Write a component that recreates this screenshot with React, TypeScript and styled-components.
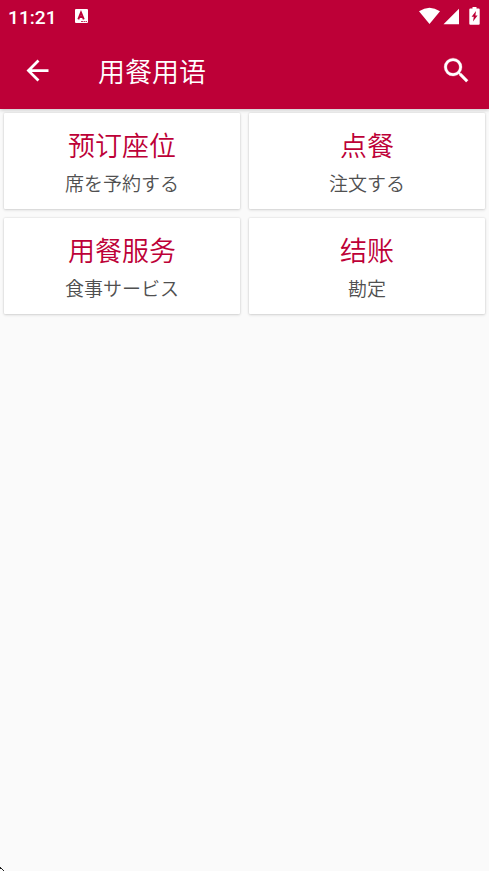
import React from 'react';
import styled, { createGlobalStyle } from 'styled-components';

type Phrase = {
  title: string;
  caption: string;
};

const phrases: Phrase[] = [
  { title: '预订座位', caption: '席を予約する' },
  { title: '点餐', caption: '注文する' },
  { title: '用餐服务', caption: '食事サービス' },
  { title: '结账', caption: '勘定' },
];

const GlobalStyle = createGlobalStyle`
  * {
    box-sizing: border-box;
  }

  body {
    margin: 0;
    background: #fafafa;
    font-family: Roboto, 'Noto Sans CJK SC', sans-serif;
  }
`;

const Screen = styled.div`
  position: relative;
  display: flex;
  flex-direction: column;
  height: 871px;
  overflow: hidden;
  background: #fafafa;
`;

const Header = styled.header`
  background: #bd0037;
  color: #fff;
  box-shadow: 0 1px 4px rgba(0, 0, 0, 0.22);
`;

const StatusBar = styled.div`
  display: flex;
  align-items: center;
  height: 32px;
  padding: 0 8px 0 8px;
`;

const Clock = styled.span`
  width: 67px;
  padding-top: 3px;
  font-size: 19.2px;
  font-weight: 500;
  line-height: 29px;
`;

const StatusIcons = styled.div`
  display: flex;
  margin-left: auto;
`;

const Toolbar = styled.div`
  display: flex;
  align-items: center;
  height: 77px;
  padding: 0 16px 0 21px;
`;

const IconButton = styled.button`
  display: flex;
  padding: 0;
  border: 0;
  background: none;
  color: inherit;
`;

const Heading = styled.h1`
  flex: 1;
  margin: 0 0 0 44px;
  padding-top: 4px;
  font-size: 27px;
  font-weight: 350;
  line-height: 40px;
`;

const Grid = styled.main`
  display: grid;
  grid-template-columns: 1fr 1fr;
  grid-auto-rows: 96px;
  gap: 9px;
  padding: 4px;
`;

const Card = styled.section`
  padding-top: 14px;
  border-radius: 1px;
  background: #fff;
  text-align: center;
  box-shadow: 0 1px 3px rgba(0, 0, 0, 0.14), 0 0 2px rgba(0, 0, 0, 0.14);
`;

const Title = styled.h2`
  margin: 0;
  color: #bd0037;
  font-size: 27px;
  font-weight: 350;
  line-height: 40px;
`;

const Caption = styled.p`
  margin: 4px 0 0;
  color: #505050;
  font-family: Roboto, 'Noto Sans CJK JP', sans-serif;
  font-size: 19px;
  font-weight: 350;
  line-height: 28px;
`;

const CornerMark = styled.svg`
  position: absolute;
  bottom: 0;
  left: 0;
`;

const KeyboardIcon: React.FC = () => (
  <svg width="13" height="14" viewBox="0 0 13 14">
    <rect width="13" height="14" rx="1" fill="#fff" />
    <path d="M3.3 10.4 L6 3.6 L8.8 10.4 M4.4 8 H8" fill="none" stroke="#bd0037" strokeWidth="1.9" />
    <path d="M6 12.5 H12" stroke="#bd0037" strokeWidth="0.8" strokeDasharray="2 0.5" />
  </svg>
);

const PhoneStatus: React.FC = () => (
  <StatusIcons>
    <svg width="62" height="18" viewBox="0 0 62 18" fill="#fff">
      <path d="M0 4.3 Q10.5 -2.8 21 4.3 L10.5 17 Z" />
      <path d="M40 1.8 V17.3 H24.5 Z" />
      <path d="M53.5 0 h4 v1.5 h2.2 q1 0 1 1 v14.3 q0 1 -1 1 h-8.4 q-1 0 -1 -1 V2.5 q0 -1 1 -1 h2.2 z" />
      <path d="M57 4 L52.6 9.8 H54.8 L54 14.6 L58.6 8.5 H56.4 Z" fill="#bd0037" />
    </svg>
  </StatusIcons>
);

const BackIcon: React.FC = () => (
  <svg width="33" height="33" viewBox="0 0 24 24" fill="currentColor">
    <path d="M20 11H7.83l5.59-5.59L12 4l-8 8 8 8 1.41-1.41L7.83 13H20v-2z" />
  </svg>
);

const SearchIcon: React.FC = () => (
  <svg width="33" height="33" viewBox="0 0 24 24" fill="currentColor" stroke="currentColor" strokeWidth="0.2">
    <path d="M15.5 14h-.79l-.28-.27A6.471 6.471 0 0 0 16 9.5 6.5 6.5 0 1 0 9.5 16c1.61 0 3.09-.59 4.23-1.57l.27.28v.79l5 4.99L20.49 19l-4.99-5zm-6 0C7.01 14 5 11.99 5 9.5S7.01 5 9.5 5 14 7.01 14 9.5 11.99 14 9.5 14z" />
  </svg>
);

const App: React.FC = () => (
  <>
    <GlobalStyle />
    <Screen>
      <Header>
        <StatusBar>
          <Clock>11:21</Clock>
          <KeyboardIcon />
          <PhoneStatus />
        </StatusBar>
        <Toolbar>
          <IconButton aria-label="戻る">
            <BackIcon />
          </IconButton>
          <Heading>用餐用语</Heading>
          <IconButton aria-label="検索">
            <SearchIcon />
          </IconButton>
        </Toolbar>
      </Header>
      <Grid>
        {phrases.map(({ title, caption }) => (
          <Card key={title}>
            <Title lang="zh-CN">{title}</Title>
            <Caption lang="ja">{caption}</Caption>
          </Card>
        ))}
      </Grid>
      <CornerMark width="4" height="4" viewBox="0 0 4 4">
        <path d="M0 0h1v1h1v1H0zM2 2h1v1H2zM3 3h1v1H3z" fill="#222" />
      </CornerMark>
    </Screen>
  </>
);

export default App;
